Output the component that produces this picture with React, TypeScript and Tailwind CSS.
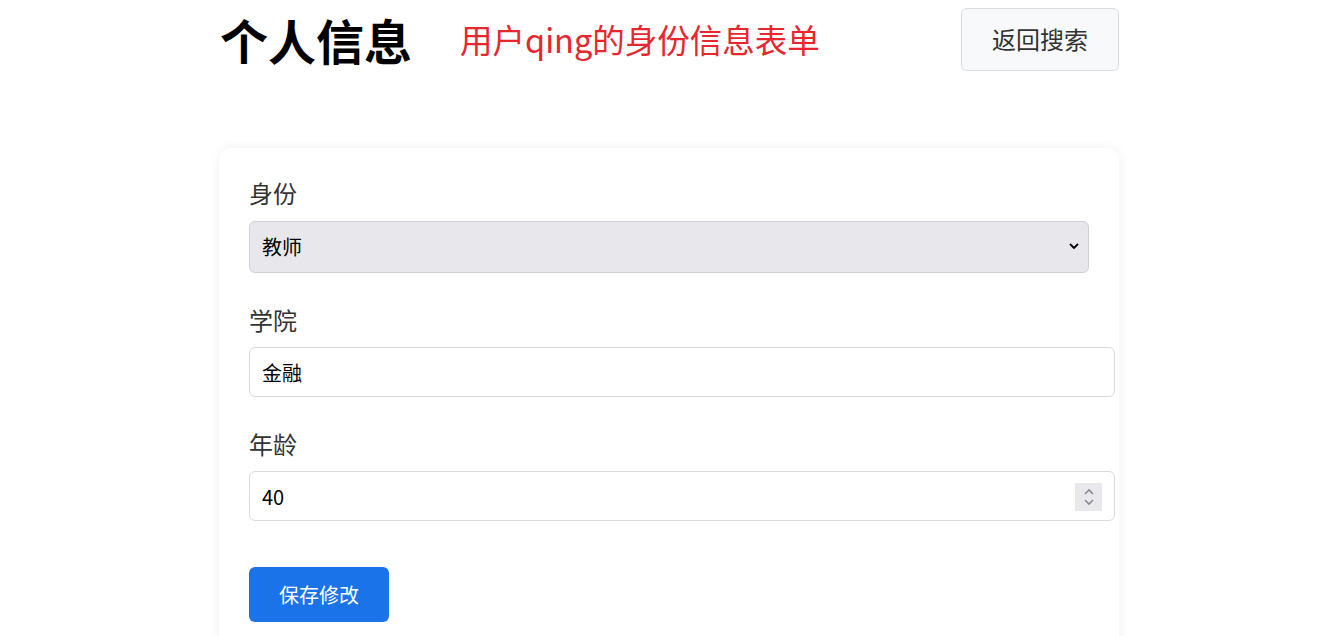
import React from "react";

const font = { fontFamily: '"Noto Sans CJK SC", "Noto Sans", "Liberation Sans", sans-serif' };

export default function App() {
  return (
    <div className="min-h-screen bg-white" style={font}>
      <div className="ml-[219px] w-[900px]">
        <div className="flex items-center h-[78px]">
          <h1 className="ml-[1px] text-[48px] font-bold leading-none text-black">个人信息</h1>
          <div className="ml-[48px] text-[32.5px] leading-none text-[#e8262e]">用户qing的身份信息表单</div>
          <button className="ml-auto h-[63px] w-[158px] rounded-[6px] border border-[#dadce0] bg-[#f8f9fa] text-[24px] text-[#333]">
            返回搜索
          </button>
        </div>
        <div className="mt-[70px] rounded-[12px] bg-white px-[30px] pt-[30px] pb-[30px] shadow-[0_0_12px_rgba(0,0,0,0.06)]">
          <div className="mb-[32px]">
            <label className="block text-[24px] leading-[29px] text-[#333] mb-[14px]">身份</label>
            <div className="relative w-full">
              <select
                defaultValue="教师"
                className="block h-[52px] w-full appearance-none rounded-[6px] border border-[#cfcfd4] bg-[#e8e7ec] px-[12px] text-[20px] text-black outline-none"
              >
                <option>学生</option>
                <option>教师</option>
              </select>
              <svg className="pointer-events-none absolute right-[9px] top-[20px]" width="12" height="10" viewBox="0 0 12 10">
                <path d="M2 3 L6 7 L10 3" fill="none" stroke="#000" strokeWidth="1.8" />
              </svg>
            </div>
          </div>
          <div className="mb-[32px]">
            <label className="block text-[24px] leading-[29px] text-[#333] mb-[13px]">学院</label>
            <input
              defaultValue="金融"
              className="block h-[50px] w-[866px] rounded-[6px] border border-[#dadada] bg-white px-[12px] text-[20px] text-black outline-none"
            />
          </div>
          <div className="mb-[46px]">
            <label className="block text-[24px] leading-[29px] text-[#333] mb-[13px]">年龄</label>
            <div className="relative w-[866px]">
              <input
                defaultValue="40"
                className="block h-[50px] w-full rounded-[6px] border border-[#dadada] bg-white px-[12px] text-[20px] text-black outline-none"
              />
              <div className="absolute right-[13px] top-[12px] flex h-[28px] w-[27px] flex-col items-center justify-center bg-[#e9e9ed]">
                <svg width="14" height="22" viewBox="0 0 14 22">
                  <path d="M3 8 L7 4 L11 8" fill="none" stroke="#8a8a92" strokeWidth="1.6" />
                  <path d="M3 14 L7 18 L11 14" fill="none" stroke="#8a8a92" strokeWidth="1.6" />
                </svg>
              </div>
            </div>
          </div>
          <button className="h-[55px] w-[140px] rounded-[6px] bg-[#1a73e8] text-[20px] text-white">保存修改</button>
        </div>
      </div>
    </div>
  );
}
